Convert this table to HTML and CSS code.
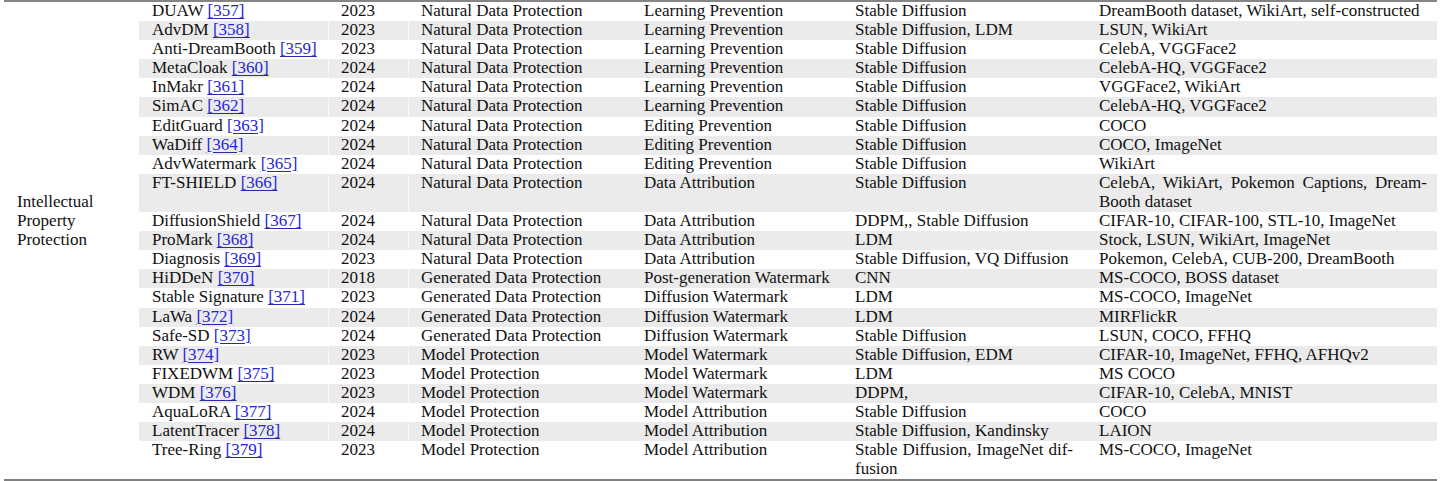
FILE: index.html
```html
<!DOCTYPE html>
<html>
<head>
<meta charset="utf-8">
<link rel="stylesheet" href="styles.css">
</head>
<body>
<table class="tbl">
<colgroup>
<col class="c0"><col class="c1"><col class="c2"><col class="c3"><col class="c4"><col class="c5"><col class="c6">
</colgroup>
<tbody>
<tr><td class="cat" rowspan="23">Intellectual<br>Property<br>Protection</td><td>DUAW <a class="ref">[357]</a></td><td class="yr">2023</td><td>Natural Data Protection</td><td>Learning Prevention</td><td>Stable Diffusion</td><td class="ds">DreamBooth dataset, WikiArt, self-constructed</td></tr>
<tr class="alt"><td>AdvDM <a class="ref">[358]</a></td><td class="yr">2023</td><td>Natural Data Protection</td><td>Learning Prevention</td><td>Stable Diffusion, LDM</td><td class="ds">LSUN, WikiArt</td></tr>
<tr><td>Anti-DreamBooth <a class="ref">[359]</a></td><td class="yr">2023</td><td>Natural Data Protection</td><td>Learning Prevention</td><td>Stable Diffusion</td><td class="ds">CelebA, VGGFace2</td></tr>
<tr class="alt"><td>MetaCloak <a class="ref">[360]</a></td><td class="yr">2024</td><td>Natural Data Protection</td><td>Learning Prevention</td><td>Stable Diffusion</td><td class="ds">CelebA-HQ, VGGFace2</td></tr>
<tr><td>InMakr <a class="ref">[361]</a></td><td class="yr">2024</td><td>Natural Data Protection</td><td>Learning Prevention</td><td>Stable Diffusion</td><td class="ds">VGGFace2, WikiArt</td></tr>
<tr class="alt"><td>SimAC <a class="ref">[362]</a></td><td class="yr">2024</td><td>Natural Data Protection</td><td>Learning Prevention</td><td>Stable Diffusion</td><td class="ds">CelebA-HQ, VGGFace2</td></tr>
<tr><td>EditGuard <a class="ref">[363]</a></td><td class="yr">2024</td><td>Natural Data Protection</td><td>Editing Prevention</td><td>Stable Diffusion</td><td class="ds">COCO</td></tr>
<tr class="alt"><td>WaDiff <a class="ref">[364]</a></td><td class="yr">2024</td><td>Natural Data Protection</td><td>Editing Prevention</td><td>Stable Diffusion</td><td class="ds">COCO, ImageNet</td></tr>
<tr><td>AdvWatermark <a class="ref">[365]</a></td><td class="yr">2024</td><td>Natural Data Protection</td><td>Editing Prevention</td><td>Stable Diffusion</td><td class="ds">WikiArt</td></tr>
<tr class="alt"><td>FT-SHIELD <a class="ref">[366]</a></td><td class="yr">2024</td><td>Natural Data Protection</td><td>Data Attribution</td><td>Stable Diffusion</td><td class="ds"><span class="jl">CelebA, WikiArt, Pokemon Captions, Dream-</span>Booth dataset</td></tr>
<tr><td>DiffusionShield <a class="ref">[367]</a></td><td class="yr">2024</td><td>Natural Data Protection</td><td>Data Attribution</td><td>DDPM,, Stable Diffusion</td><td class="ds">CIFAR-10, CIFAR-100, STL-10, ImageNet</td></tr>
<tr class="alt"><td>ProMark <a class="ref">[368]</a></td><td class="yr">2024</td><td>Natural Data Protection</td><td>Data Attribution</td><td>LDM</td><td class="ds">Stock, LSUN, WikiArt, ImageNet</td></tr>
<tr><td>Diagnosis <a class="ref">[369]</a></td><td class="yr">2023</td><td>Natural Data Protection</td><td>Data Attribution</td><td>Stable Diffusion, VQ Diffusion</td><td class="ds">Pokemon, CelebA, CUB-200, DreamBooth</td></tr>
<tr class="alt"><td>HiDDeN <a class="ref">[370]</a></td><td class="yr">2018</td><td>Generated Data Protection</td><td>Post-generation Watermark</td><td>CNN</td><td class="ds">MS-COCO, BOSS dataset</td></tr>
<tr><td>Stable Signature <a class="ref">[371]</a></td><td class="yr">2023</td><td>Generated Data Protection</td><td>Diffusion Watermark</td><td>LDM</td><td class="ds">MS-COCO, ImageNet</td></tr>
<tr class="alt"><td>LaWa <a class="ref">[372]</a></td><td class="yr">2024</td><td>Generated Data Protection</td><td>Diffusion Watermark</td><td>LDM</td><td class="ds">MIRFlickR</td></tr>
<tr><td>Safe-SD <a class="ref">[373]</a></td><td class="yr">2024</td><td>Generated Data Protection</td><td>Diffusion Watermark</td><td>Stable Diffusion</td><td class="ds">LSUN, COCO, FFHQ</td></tr>
<tr class="alt"><td>RW <a class="ref">[374]</a></td><td class="yr">2023</td><td>Model Protection</td><td>Model Watermark</td><td>Stable Diffusion, EDM</td><td class="ds">CIFAR-10, ImageNet, FFHQ, AFHQv2</td></tr>
<tr><td>FIXEDWM <a class="ref">[375]</a></td><td class="yr">2023</td><td>Model Protection</td><td>Model Watermark</td><td>LDM</td><td class="ds">MS COCO</td></tr>
<tr class="alt"><td>WDM <a class="ref">[376]</a></td><td class="yr">2023</td><td>Model Protection</td><td>Model Watermark</td><td>DDPM,</td><td class="ds">CIFAR-10, CelebA, MNIST</td></tr>
<tr><td>AquaLoRA <a class="ref">[377]</a></td><td class="yr">2024</td><td>Model Protection</td><td>Model Attribution</td><td>Stable Diffusion</td><td class="ds">COCO</td></tr>
<tr class="alt"><td>LatentTracer <a class="ref">[378]</a></td><td class="yr">2024</td><td>Model Protection</td><td>Model Attribution</td><td>Stable Diffusion, Kandinsky</td><td class="ds">LAION</td></tr>
<tr><td>Tree-Ring <a class="ref">[379]</a></td><td class="yr">2023</td><td>Model Protection</td><td>Model Attribution</td><td><span class="jl">Stable Diffusion, ImageNet dif-</span>fusion</td><td class="ds">MS-COCO, ImageNet</td></tr>
</tbody>
</table>
</body>
</html>
```
FILE: styles.css
```css
html, body {
  margin: 0;
  padding: 0;
  background: #ffffff;
}
body {
  font-family: "Liberation Serif", "Times New Roman", serif;
  font-size: 17px;
  color: #111111;
}
.tbl {
  margin-left: 4px;
  width: 1433px;
  table-layout: fixed;
  border-collapse: collapse;
  border-spacing: 0;
  border-top: 2px solid #858585;
  border-bottom: 2.5px solid #808080;
}
.c0 { width: 135px; }
.c1 { width: 189px; }
.c2 { width: 80px; }
.c3 { width: 223px; }
.c4 { width: 211px; }
.c5 { width: 244px; }
.c6 { width: 351px; }
.tbl td {
  padding: 0 13px 2px 13px;
  line-height: 17.1px;
  vertical-align: top;
  white-space: nowrap;
  overflow: visible;
}
.tbl td.cat {
  background: #ffffff;
  padding-top: 190px;
  line-height: 19.1px;
  white-space: normal;
}
.tbl td.ds {
  padding-right: 10px;
}
.alt td {
  background: #ebebeb;
}
.alt td.yr {
  box-shadow: inset 1px 0 0 #f7f7f7;
}
.alt td.yr + td {
  box-shadow: inset 1px 0 0 #f7f7f7;
}
.jl {
  display: block;
  margin-bottom: 2px;
  text-align: justify;
  text-align-last: justify;
}
.ref {
  color: #2626d8;
  text-decoration: underline;
  text-decoration-color: #2a2aa8;
  text-decoration-thickness: 1px;
  text-underline-offset: 2px;
}
```
